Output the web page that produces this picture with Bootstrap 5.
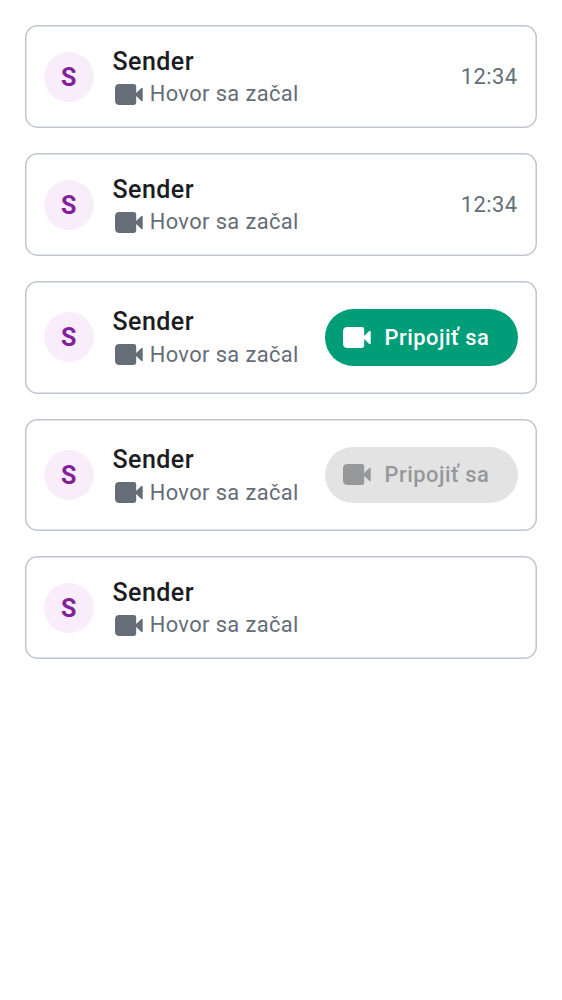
<!DOCTYPE html>
<html lang="sk">
<head>
<meta charset="utf-8">
<meta name="viewport" content="width=device-width, initial-scale=1">
<title>Hovory</title>
<link href="https://cdn.jsdelivr.net/npm/bootstrap@5.3.0/dist/css/bootstrap.min.css" rel="stylesheet">
<style>
body{font-family:Roboto,"Liberation Sans",sans-serif;background:#fff;color:#1b1d22}
.calls{padding:25px;gap:25px}
.call{height:103.1px;padding:0 18.75px;gap:18.75px;border:0;border-radius:12.5px;box-shadow:inset 0 0 0 1.5px #c0c5cf}
.call.tall{height:112.5px}
.avatar{width:50px;height:50px;background:#faedfb;color:#822299;font-size:25px;font-weight:700;line-height:51.5px}
.text-lines{padding-bottom:2.3px}
.who{font-size:25px;line-height:37.7px;font-weight:500;letter-spacing:.45px;color:#1b1d22}
.what{font-size:21.875px;line-height:28px;letter-spacing:.39px;color:#656d77}
.cam{width:28px;height:21px;flex:none;fill:currentColor}
.what .cam{margin:0 6.8px .4px 2.4px}
.when{font-size:21.875px;letter-spacing:.45px;color:#656d77;padding-top:2px;margin-right:.8px}
.join{width:193px;height:56.25px;padding:0 0 0 18px;border:0;font-size:21.875px;font-weight:500;letter-spacing:.5px;gap:13.3px;background:#009d79;color:#fff}
.join span{padding-top:1.6px}
.join:hover{background:#009d79;color:#fff}
.join:disabled{background:#e3e3e3;color:#97989a;opacity:1}
</style>
</head>
<body>
<svg class="d-none"><symbol id="cam" viewBox="0 0 28 21"><path d="M4.4 0H18.8Q21.2 0 21.2 2.4V9L25.8 4.4Q27.7 2.8 27.7 4.8V16.2Q27.7 18.2 25.8 16.6L21.2 12V18.6Q21.2 21 18.8 21H4.4Q0 21 0 16.6V4.4Q0 0 4.4 0Z"/></symbol></svg>
<main class="calls d-flex flex-column">
  <article class="call card flex-row align-items-center">
    <div class="avatar rounded-circle text-center flex-shrink-0">S</div>
    <div class="text-lines flex-grow-1"><div class="who">Sender</div><div class="what d-flex align-items-center text-nowrap"><svg class="cam"><use href="#cam"/></svg>Hovor sa začal</div></div>
    <time class="when">12:34</time>
  </article>
  <article class="call card flex-row align-items-center">
    <div class="avatar rounded-circle text-center flex-shrink-0">S</div>
    <div class="text-lines flex-grow-1"><div class="who">Sender</div><div class="what d-flex align-items-center text-nowrap"><svg class="cam"><use href="#cam"/></svg>Hovor sa začal</div></div>
    <time class="when">12:34</time>
  </article>
  <article class="call tall card flex-row align-items-center">
    <div class="avatar rounded-circle text-center flex-shrink-0">S</div>
    <div class="text-lines flex-grow-1"><div class="who">Sender</div><div class="what d-flex align-items-center text-nowrap"><svg class="cam"><use href="#cam"/></svg>Hovor sa začal</div></div>
    <button class="join btn rounded-pill d-flex align-items-center flex-shrink-0"><svg class="cam"><use href="#cam"/></svg><span>Pripojiť sa</span></button>
  </article>
  <article class="call tall card flex-row align-items-center">
    <div class="avatar rounded-circle text-center flex-shrink-0">S</div>
    <div class="text-lines flex-grow-1"><div class="who">Sender</div><div class="what d-flex align-items-center text-nowrap"><svg class="cam"><use href="#cam"/></svg>Hovor sa začal</div></div>
    <button class="join btn rounded-pill d-flex align-items-center flex-shrink-0" disabled><svg class="cam"><use href="#cam"/></svg><span>Pripojiť sa</span></button>
  </article>
  <article class="call card flex-row align-items-center">
    <div class="avatar rounded-circle text-center flex-shrink-0">S</div>
    <div class="text-lines flex-grow-1"><div class="who">Sender</div><div class="what d-flex align-items-center text-nowrap"><svg class="cam"><use href="#cam"/></svg>Hovor sa začal</div></div>
  </article>
</main>
<script src="https://cdn.jsdelivr.net/npm/bootstrap@5.3.0/dist/js/bootstrap.bundle.min.js"></script>
</body>
</html>
